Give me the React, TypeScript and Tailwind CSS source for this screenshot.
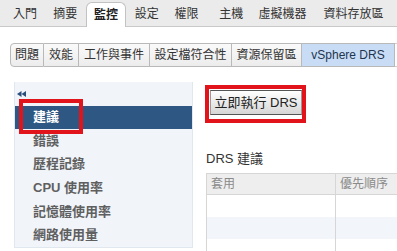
const FONT = "font-['Liberation_Sans','Noto_Sans_CJK_TC',sans-serif]";

const topTabs = [
  { label: "入門", w: "w-[40px]" },
  { label: "摘要", w: "w-[41px]" },
  { label: "監控", w: "w-[41px]", active: true },
  { label: "設定", w: "w-[41px]" },
  { label: "權限", w: "w-[39px]" },
  { label: "主機", w: "w-[51px]" },
  { label: "虛擬機器", w: "w-[52px]" },
  { label: "資料存放區", w: "w-[89px] pl-[15px] justify-start" },
];

const subTabs = [
  { label: "問題", w: "w-[34px]" },
  { label: "效能", w: "w-[35px]" },
  { label: "工作與事件", w: "w-[71px]" },
  { label: "設定檔符合性", w: "w-[82px]" },
  { label: "資源保留區", w: "w-[70px]" },
  { label: "vSphere DRS", w: "w-[93px]", active: true },
];

const navItems = ["錯誤", "歷程記錄", "CPU 使用率", "記憶體使用率", "網路使用量"];

const App = () => {
  return (
    <div className={`w-[397px] h-[251px] bg-white overflow-hidden text-[#333] ${FONT}`}>
      {/* main tabs */}
      <div className="h-[27px] bg-[#ebebeb] border-b border-[#c9c9c9] flex items-end pl-[5px]">
        {topTabs.map((t) =>
          t.active ? (
            <div
              key={t.label}
              className={`${t.w} h-[25px] -mb-px bg-white border border-b-0 border-[#c2c2c2] rounded-t-[6px] flex items-center justify-center text-[12px] font-bold text-[#222] whitespace-nowrap`}
            >
              {t.label}
            </div>
          ) : (
            <div
              key={t.label}
              className={`${t.w} h-[25px] flex items-center justify-center text-[12px] text-[#333] whitespace-nowrap`}
            >
              {t.label}
            </div>
          )
        )}
      </div>

      {/* sub tabs */}
      <div className="mt-[16px] ml-[10px] flex h-[24px]">
        {subTabs.map((t, i) => (
          <div
            key={t.label}
            className={`${t.w} h-[24px] flex items-center justify-center text-[12px] whitespace-nowrap border-y border-r border-[#b9b9b9] ${
              i === 0 ? "border-l rounded-l-[4px]" : ""
            } ${t.active ? "bg-[#c8ddf5] text-[#1f3550]" : "bg-gradient-to-b from-[#fafafa] to-[#ececec] text-[#333]"}`}
          >
            {t.label}
          </div>
        ))}
        <div className="flex-1 h-[24px] border-y border-[#d0d0d0] bg-white" />
      </div>

      <div className="mt-[15px] flex">
        {/* sidebar */}
        <div className="relative ml-[14px] w-[179px] h-[166px] bg-[#f1f5fa] border-x border-b border-[#e1e7ef] flex flex-col">
          <div className="h-[24px] pl-[2px] pt-[9px]">
            <svg width="10" height="6" viewBox="0 0 10 6">
              <path d="M0 3 L4.5 0 L4.5 6 Z" fill="#2b4f7a" />
              <path d="M4.5 3 L9 0 L9 6 Z" fill="#2b4f7a" />
            </svg>
          </div>
          <div className="h-[23px] bg-[#2e5883] flex items-center pl-[18px] text-[13px] font-bold text-white">
            建議
          </div>
          {navItems.map((n) => (
            <div key={n} className="h-[24px] flex items-center pl-[18px] text-[13px] font-bold text-[#5f5f5f] whitespace-nowrap">
              {n}
            </div>
          ))}
          <div className="absolute left-[4px] top-[17px] w-[64px] h-[35px] border-[4px] border-[#e1141b]" />
        </div>

        {/* content */}
        <div className="flex-1 pl-[12px]">
          <div className="mt-[3px] w-[101px] h-[38px] border-[4px] border-[#e1141b] pl-px pt-px">
            <button className="w-[92px] h-[25px] bg-gradient-to-b from-[#ffffff] to-[#d6d6d6] border border-[#9a9a9a] border-y-[#555] text-[13px] text-[#222] whitespace-nowrap">
              立即執行 DRS
            </button>
          </div>
          <div className="mt-[29px] pl-px text-[13px] leading-[14px] text-[#333]">DRS 建議</div>
          <div className="mt-[7px] ml-px border-l border-t border-[#d6d6d6]">
            <div className="h-[21px] flex bg-[#eeeeee] border-b border-[#d6d6d6] text-[12px] text-[#8a8a8a]">
              <div className="w-[129px] border-r border-[#d6d6d6] pl-[4px] flex items-center">套用</div>
              <div className="flex-1 pl-[4px] flex items-center">優先順序</div>
            </div>
            {["bg-white", "bg-[#f2f5fa]", "bg-white"].map((bg, i) => (
              <div key={i} className={`h-[22px] flex ${bg}`}>
                <div className="w-[129px] border-r border-[#d6d6d6]" />
                <div className="flex-1" />
              </div>
            ))}
          </div>
        </div>
      </div>
    </div>
  );
};

export default App;
